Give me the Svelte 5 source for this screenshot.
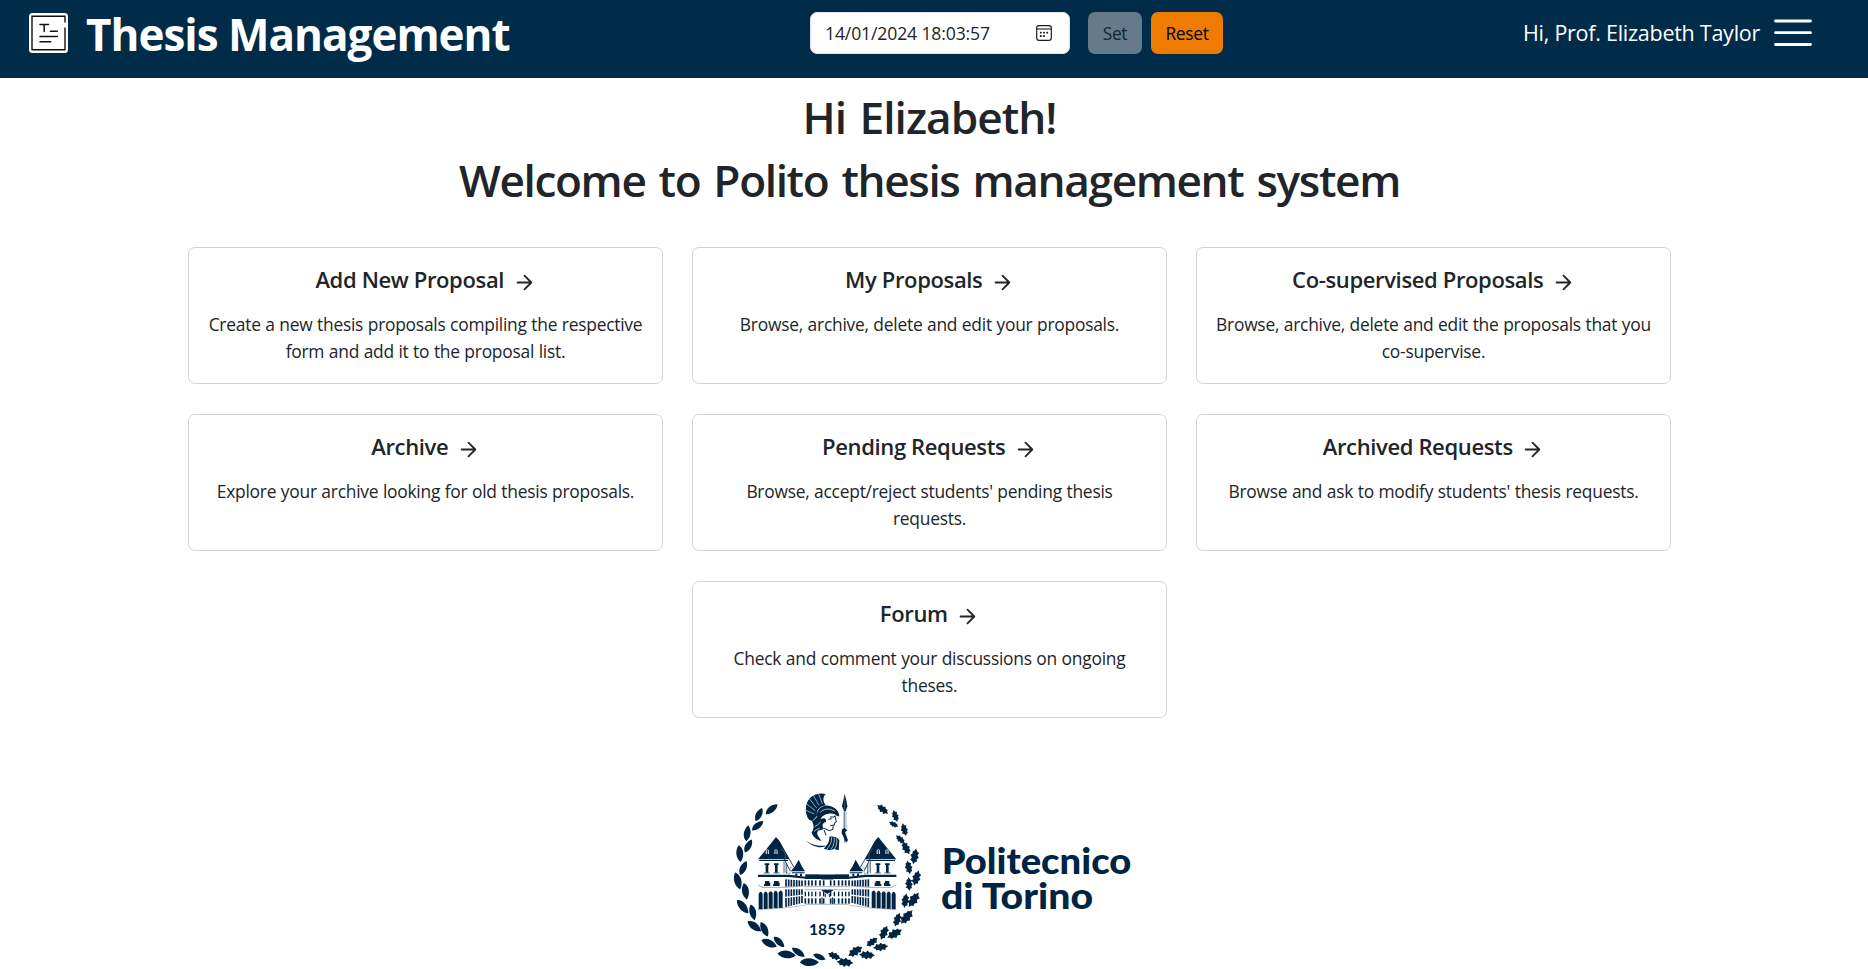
<script>
  const cards = [
    { title: 'Add New Proposal', text: 'Create a new thesis proposals compiling the respective form and add it to the proposal list.' },
    { title: 'My Proposals', text: 'Browse, archive, delete and edit your proposals.' },
    { title: 'Co-supervised Proposals', text: 'Browse, archive, delete and edit the proposals that you co-supervise.' },
    { title: 'Archive', text: 'Explore your archive looking for old thesis proposals.' },
    { title: 'Pending Requests', text: "Browse, accept/reject students' pending thesis requests." },
    { title: 'Archived Requests', text: "Browse and ask to modify students' thesis requests." },
    { title: 'Forum', text: 'Check and comment your discussions on ongoing theses.' }
  ];

  // Laurel leaves: x, y, rotation, scale
  const laurel = [
    [155, 88, -38, 1.05], [117, 104, -62, 1], [113, 137, -38, 1], [82, 160, -80, 1.1],
    [85, 198, -60, 1], [59, 221, 86, 1.15], [70, 264, -64, 1.05], [53, 303, 76, 1.2],
    [76, 334, 82, 1.15], [68, 380, 52, 1.2], [98, 397, 78, 1.1], [103, 439, 38, 1.15],
    [133, 448, 66, 1.1], [147, 490, 26, 1.15], [177, 486, 46, 1], [200, 524, 8, 1.25],
    [235, 517, 36, 1.05], [268, 547, 2, 1.3], [298, 531, 24, 0.9]
  ];

  // Oak leaves: x, y, rotation, scale
  const oak = [
    [488, 88, 36, 0.95], [526, 108, 68, 0.85], [521, 133, 24, 0.7], [553, 149, 72, 0.9],
    [541, 178, 40, 0.8], [558, 204, 60, 1], [584, 229, 98, 1.1], [566, 262, 76, 0.95],
    [589, 294, 104, 1.1], [567, 312, 84, 0.95], [581, 359, 122, 1.2], [556, 362, 96, 1],
    [560, 411, 128, 1.2], [532, 419, 106, 1], [524, 461, 148, 1.15], [492, 458, 112, 1.05],
    [482, 501, 170, 1.05], [456, 486, 140, 0.95], [441, 525, 180, 1.1], [406, 514, 144, 1.15],
    [375, 547, 182, 1.15], [343, 528, 200, 0.95]
  ];

  const arches = [122, 137, 152, 167, 182];
  const wing = [198, 206, 214, 222, 230, 238, 246];
  const center = [256, 266, 276, 287, 300, 311];
</script>

<header>
  <div class="brand">
    <svg class="logo" viewBox="0 0 39 40" width="39" height="40">
      <rect width="39" height="40" rx="3.5" fill="#fff" />
      <path d="M36 9V3.3H3V36.8H36V15" fill="none" stroke="#111" stroke-width="1.4" stroke-linejoin="round" stroke-linecap="round" />
      <path d="M11 11.5h8.5M15.2 11.5V18.6M21.3 18.3h7M11 23.5h17.3M11 28.7h10.6" fill="none" stroke="#111" stroke-width="1.5" stroke-linecap="round" />
    </svg>
    <h1>Thesis Management</h1>
  </div>

  <div class="clock">
    <div class="field">
      <span>14/01/2024 18:03:57</span>
      <svg viewBox="0 0 16 16" width="16" height="16">
        <rect x="0.7" y="0.7" width="14.6" height="14.6" rx="2.2" fill="none" stroke="#1c1c1c" stroke-width="1.2" />
        <path d="M1 4h14" stroke="#1c1c1c" stroke-width="1.1" />
        <g fill="#1c1c1c">
          <rect x="7.1" y="6.7" width="1.8" height="1.8" rx=".5" /><rect x="10.3" y="6.7" width="1.8" height="1.8" rx=".5" />
          <rect x="3.9" y="6.7" width="1.8" height="1.8" rx=".5" /><rect x="3.9" y="10.1" width="1.8" height="1.8" rx=".5" />
          <rect x="7.1" y="10.1" width="1.8" height="1.8" rx=".5" />
        </g>
      </svg>
    </div>
    <button class="set">Set</button>
    <button class="reset">Reset</button>
  </div>

  <div class="user">
    <span>Hi, Prof. Elizabeth Taylor</span>
    <svg viewBox="0 0 38 28" width="38" height="28">
      <path d="M1.5 2h35M1.5 13.7h35M1.5 25.5h35" stroke="#fff" stroke-width="2.8" stroke-linecap="round" />
    </svg>
  </div>
</header>

<main>
  <h2>Hi Elizabeth!</h2>
  <h2>Welcome to Polito thesis management system</h2>

  <section class="cards">
    {#each cards as card}
      <article>
        <h5>
          <span>{card.title}</span>
          <svg viewBox="0 0 24 24" width="23" height="23">
            <path d="M4.8 12H19M12 4.9 19.1 12 12 19.1" fill="none" stroke="#212529" stroke-width="1.9" stroke-linecap="round" stroke-linejoin="round" />
          </svg>
        </h5>
        <p>{card.text}</p>
      </article>
    {/each}
  </section>

  <svg class="polito" viewBox="0 0 1257 567" width="419" height="189">
    <defs>
      <path id="laurel-leaf" d="M-22 1C-13-12 7-13 22-1C11 11-9 12-22 1Z" />
      <path id="oak-leaf" d="M-22-1L-14-5L-11-11L-4-7L2-12L7-7L14-8L15-3L22 1L14 5L11 11L4 7L-2 12L-7 7L-14 7L-15 3Z" />
      <g id="palace-half">
        <path d="M114 238L158 184L168 171L178 182L208 238Z" />
        <path d="M178 186L222 262M172 196L210 272" stroke="#002443" stroke-width="2.5" />
        <path d="M186 206L196 222V276L210 282V262L218 264" fill="none" stroke="#6d7f92" stroke-width="1.6" />
        <path d="M137 222V212Q142 202 147 212V222ZM163 222V212Q168 202 173 212V222Z" fill="#d5dbe2" />
        <path d="M142 209V222M168 209V222" stroke="#002443" stroke-width="3" />
        <path d="M118 240H204V243H118Z" />
        <path d="M134 250H148V255H145V278H137V255H134ZM162 250H176V255H173V278H165V255H162Z" />
        <path d="M131 279H150M160 279H179M192 244V280M200 250V282" stroke="#002443" stroke-width="2" />
        <path d="M114 284H208L258 290V296L205 291H114Z" />
        <path d="M135 303H148V308H151V318H132V312H135ZM162 303H176V308H179V318H159V312H162Z" />
        <path d="M114 314L126 322H195L250 318" fill="none" stroke="#6d7f92" stroke-width="2" />
        <path d="M212 274L224 260L236 239L246 260L255 274Z" />
        <path d="M216 277H254V280H216ZM226 281h6v7h-6ZM240 281h6v7h-6Z" />
        {#each arches as x, i}
          <path d="M{x - 6} {388 - i}V{342 - i}Q{x} {329 - i} {x + 6} {342 - i}V{388 - i}Z" />
        {/each}
        <path d="M114 389L190 384L255 376" fill="none" stroke="#7e8fa0" stroke-width="1.6" />
        {#each wing as x, i}
          <rect x={x - 2.5} y={298 + i * 0.6} width="5" height={22 - i} />
          <rect x={x - 2.5} y={328} width="5" height={22 - i} />
          <rect x={x - 2.5} y={354 - i} width="5" height={27 - i} />
        {/each}
        <path d="M256 283H322V297H256Z" />
        <path d="M252 320H322M254 329H322M256 373H322" stroke="#7e8fa0" stroke-width="2" />
        {#each center as x}
          <rect x={x - 2.5} y="301" width="5" height="16" />
          <rect x={x - 2} y="335" width="4" height="14" />
          <rect x={x - 2.5} y="355" width="5" height="16" />
        {/each}
      </g>
    </defs>

    <g fill="#002443">
      {#each laurel as [x, y, r, s]}
        <use href="#laurel-leaf" transform="translate({x} {y}) rotate({r}) scale({s})" />
      {/each}
      {#each oak as [x, y, r, s]}
        <use href="#oak-leaf" transform="translate({x} {y}) rotate({r}) scale({s})" />
      {/each}

      <use href="#palace-half" />
      <use href="#palace-half" transform="translate(643 0) scale(-1 1)" />
      <path d="M299 283L322 276L345 283Z" fill="#fff" />
      <path d="M304 297H340M306 331H338L322 340ZM306 352V372M338 352V372M316 341V352M328 341V352" stroke="#002443" stroke-width="3" />

      <path d="M317 42C300 37 274 44 264 62C255 78 255 101 266 118L276 124L291 108C288 91 299 78 318 76C309 67 307 52 317 42Z" />
      <path d="M296 42L307 72M280 46L297 76M268 56L290 84M259 71L286 92M256 90L283 102" stroke="#fff" stroke-width="1.7" />
      <path d="M290 108C290 88 307 75 326 77C346 80 357 94 358 109L352 109C347 102 338 99 326 101C312 103 303 110 301 121Z" />
      <path d="M300 98C310 86 328 83 345 94" fill="none" stroke="#fff" stroke-width="2" />
      <path d="M276 125L292 110L304 117C313 111 320 116 318 126C307 128 305 138 312 146L301 151C293 149 290 158 293 166L304 183C290 181 277 169 275 157C282 148 283 134 276 125Z" />
      <path d="M284 140Q294 135 302 126M282 154Q290 148 299 144" fill="none" stroke="#fff" stroke-width="2" />
      <path d="M330 111H342L345 107L349 126L343 129V136L339 139V148L328 152L312 145M325 118L335 116M331 137L341 135M312 150L318 166" fill="none" stroke="#002443" stroke-width="3" />
      <path d="M256 179C270 194 299 201 323 196C309 205 279 205 256 179Z" />
      <path d="M311 206C324 195 329 181 328 170C343 169 355 174 358 181L356 211L342 207L330 211Z" />
      <path d="M342 172C345 187 340 198 332 209M350 175C352 190 348 201 342 209M334 172C337 184 330 196 321 207" fill="none" stroke="#fff" stroke-width="2" />

      <path d="M374 42L379 60L382 79L377 94H372L366 79L370 60Z" />
      <path d="M374 92V187" stroke="#002443" stroke-width="1.8" />
      <path d="M371 96V145M378 96V145" stroke="#7e8fa0" stroke-width="1.8" />
      <path d="M366 148L374 144L382 151L375 157L384 181L378 188L369 168L365 160Z" />
      <path d="M374 50V90" stroke="#8494a5" stroke-width="1.2" />

      <text class="year" x="267" y="465" textLength="109" lengthAdjust="spacingAndGlyphs">1859</text>
      <text class="name" x="665" y="283" textLength="569" lengthAdjust="spacingAndGlyphs">Politecnico</text>
      <text class="name" x="663" y="388" textLength="456" lengthAdjust="spacingAndGlyphs">di Torino</text>
    </g>
  </svg>
</main>

<style>
  :global(body) {
    margin: 0;
    background: #fff;
    color: #212529;
    font-family: 'Open Sans', 'Noto Sans', sans-serif;
    overflow: hidden;
  }
  header {
    box-sizing: border-box;
    height: 78px;
    padding: 7px 56px 0 29px;
    background: #002b49;
    color: #fff;
    display: grid;
    grid-template-columns: 781px 1fr auto;
    align-items: start;
  }
  .brand { display: flex; gap: 18px; }
  .logo { margin-top: 6px; }
  h1 {
    margin: 0;
    font-size: 44px;
    line-height: 54px;
    font-weight: 700;
    letter-spacing: -1px;
    white-space: nowrap;
  }
  .clock { display: flex; padding-top: 5px; }
  .field {
    box-sizing: border-box;
    width: 260px;
    height: 42px;
    padding: 0 17px 0 14px;
    border: 1px solid #dee2e6;
    border-radius: 7px;
    background: #fff;
    color: #212529;
    display: flex;
    align-items: center;
    justify-content: space-between;
    font-size: 17.6px;
    letter-spacing: -0.14px;
  }
  button {
    height: 42px;
    padding: 0 0 1px;
    border: 0;
    border-radius: 7px;
    font: 17.4px 'Open Sans', sans-serif;
    letter-spacing: -0.35px;
  }
  .set { width: 54px; margin-left: 18px; background: #667a8b; color: #0e2739; }
  .reset { width: 72px; margin-left: 9px; background: #ef7b00; color: #000; }
  .user {
    display: flex;
    gap: 14px;
    font-size: 21.5px;
    line-height: 30px;
    letter-spacing: -0.26px;
    padding-top: 11px;
  }
  .user svg { margin-top: 1px; }
  main {
    width: 1859px;
    padding-top: 12px;
    display: flex;
    flex-direction: column;
    align-items: center;
  }
  h2 {
    margin: 0 0 9px;
    font-size: 44.2px;
    line-height: 54px;
    font-weight: 580;
    letter-spacing: -1.38px;
    word-spacing: 3px;
  }
  h2:first-child { letter-spacing: -1px; }
  .cards {
    width: 1483px;
    margin-top: 31px;
    display: flex;
    flex-wrap: wrap;
    justify-content: center;
    gap: 29.8px 29px;
  }
  article {
    box-sizing: border-box;
    width: 475px;
    height: 137px;
    padding: 18px 17px;
    border: 1px solid #d3d4d5;
    border-radius: 7px;
    text-align: center;
  }
  h5 {
    margin: 0 0 17px;
    display: flex;
    justify-content: center;
    gap: 8.5px;
    font-size: 22px;
    line-height: 27px;
    font-weight: 590;
    letter-spacing: -0.36px;
  }
  h5 svg { margin-top: 5px; }
  p {
    margin: 0;
    font-size: 17.4px;
    line-height: 27px;
    letter-spacing: -0.24px;
    word-spacing: 0.3px;
  }
  .polito { display: block; margin-top: 62.4px; }
  .year { font: 700 44px Lato, sans-serif; }
  .name { font: 900 110px Lato, sans-serif; }
</style>
